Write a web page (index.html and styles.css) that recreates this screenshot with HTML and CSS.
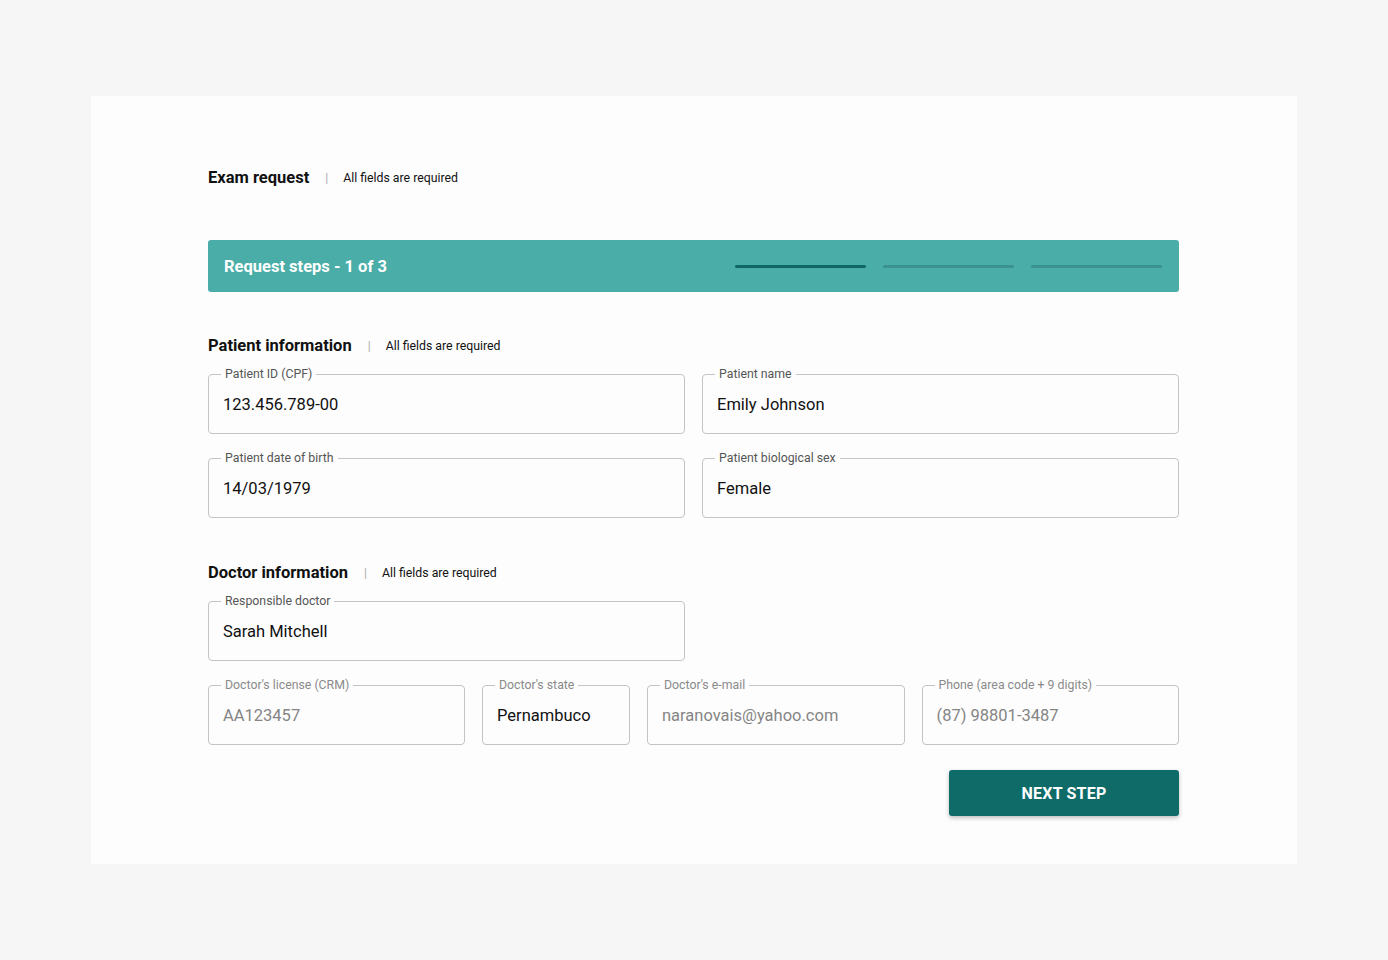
FILE: index.html
```html
<!DOCTYPE html>
<html lang="en">
<head>
  <meta charset="UTF-8">
  <meta name="viewport" content="width=device-width, initial-scale=1.0">
  <title>Exam request</title>
  <link rel="stylesheet" href="styles.css">
</head>
<body>
  <!-- White card holding the whole form -->
  <main class="card">
    <div class="section-head top-head">
      <h1 class="title">Exam request</h1>
      <span class="sep">|</span>
      <span class="note">All fields are required</span>
    </div>

    <!-- Step indicator bar -->
    <div class="steps">
      <span class="steps-text">Request steps - 1 of 3</span>
      <div class="steps-bars">
        <span class="bar active"></span>
        <span class="bar"></span>
        <span class="bar"></span>
      </div>
    </div>

    <!-- Patient section -->
    <div class="section-head">
      <h2 class="title">Patient information</h2>
      <span class="sep">|</span>
      <span class="note">All fields are required</span>
    </div>
    <div class="grid two">
      <fieldset class="field">
        <legend>Patient ID (CPF)</legend>
        <div class="value">123.456.789-00</div>
      </fieldset>
      <fieldset class="field">
        <legend>Patient name</legend>
        <div class="value">Emily Johnson</div>
      </fieldset>
      <fieldset class="field">
        <legend>Patient date of birth</legend>
        <div class="value">14/03/1979</div>
      </fieldset>
      <fieldset class="field">
        <legend>Patient biological sex</legend>
        <div class="value">Female</div>
      </fieldset>
    </div>

    <!-- Doctor section -->
    <div class="section-head doctor-head">
      <h2 class="title">Doctor information</h2>
      <span class="sep">|</span>
      <span class="note">All fields are required</span>
    </div>
    <div class="grid two">
      <fieldset class="field">
        <legend>Responsible doctor</legend>
        <div class="value">Sarah Mitchell</div>
      </fieldset>
    </div>
    <div class="grid four">
      <fieldset class="field disabled">
        <legend>Doctor's license (CRM)</legend>
        <div class="value">AA123457</div>
      </fieldset>
      <fieldset class="field">
        <legend class="muted">Doctor's state</legend>
        <div class="value">Pernambuco</div>
      </fieldset>
      <fieldset class="field disabled">
        <legend>Doctor's e-mail</legend>
        <div class="value">naranovais@yahoo.com</div>
      </fieldset>
      <fieldset class="field disabled">
        <legend>Phone (area code + 9 digits)</legend>
        <div class="value">(87) 98801-3487</div>
      </fieldset>
    </div>

    <div class="actions">
      <button class="next-btn" type="button">NEXT STEP</button>
    </div>
  </main>
</body>
</html>
```

FILE: styles.css
```css
body {
  background-color: #f5f6f5;
  margin: 0;
  padding: 96px 0 0 91px;
  font-family: Roboto, "Liberation Sans", Arial, sans-serif;
  color: #111;
  min-height: 100vh;
  box-sizing: border-box;
}
/* Card */
.card {
  width: 1206px;
  box-sizing: border-box;
  background: #fdfdfd;
  padding: 72px 118px 48px 117px;
}
/* Section headings with the "required" note */
.section-head {
  display: flex;
  align-items: center;
  height: 20px;
  margin: 44px 0 11px;
}
.top-head {
  margin: 0 0 52px;
}
.doctor-head {
  margin-top: 45px;
}
.title {
  margin: 0;
  font-size: 16.5px;
  font-weight: 700;
  line-height: 20px;
  color: #111;
}
.sep {
  margin: 0 15px 0 16px;
  color: #aaa;
  font-size: 12px;
}
.note {
  font-size: 12.3px;
  color: #111;
}
/* Steps bar */
.steps {
  display: flex;
  align-items: center;
  justify-content: space-between;
  height: 52px;
  padding: 0 17px 0 16px;
  background: #4aada8;
  border-radius: 3px;
}
.steps-text {
  color: #fff;
  font-size: 16.5px;
  font-weight: 700;
}
.steps-bars {
  display: flex;
  gap: 17px;
}
.bar {
  display: block;
  width: 131px;
  height: 3px;
  border-radius: 2px;
  background: #3b918d;
}
.bar.active {
  background: #0f6662;
}
/* Field grids */
.grid {
  display: grid;
  gap: 17px;
}
.grid.two {
  grid-template-columns: 1fr 1fr;
}
.grid.four {
  grid-template-columns: 257px 148px 1fr 1fr;
  margin-top: 17px;
}
/* Outlined text field */
.field {
  margin: 0;
  padding: 14px 14px 18px 14px;
  border: 1px solid #c4c4c4;
  border-radius: 4px;
  min-width: 0;
}
.field legend {
  padding: 0 4px;
  margin-left: -2px;
  font-size: 12.3px;
  line-height: 14px;
  color: #555;
}
.value {
  font-size: 16.5px;
  line-height: 20px;
  color: #111;
  white-space: nowrap;
}
.field.disabled legend,
.field legend.muted {
  color: #8a8a8a;
}
.field.disabled .value {
  color: #858585;
}
/* Action button */
.actions {
  display: flex;
  justify-content: flex-end;
  margin-top: 25px;
}
.next-btn {
  width: 230px;
  height: 46px;
  border: none;
  border-radius: 3px;
  background: #0f6b68;
  color: #fff;
  font-family: inherit;
  font-size: 16px;
  font-weight: 700;
  letter-spacing: 0.2px;
  box-shadow: 0 2px 4px rgba(0, 0, 0, 0.25);
  cursor: pointer;
}
```
